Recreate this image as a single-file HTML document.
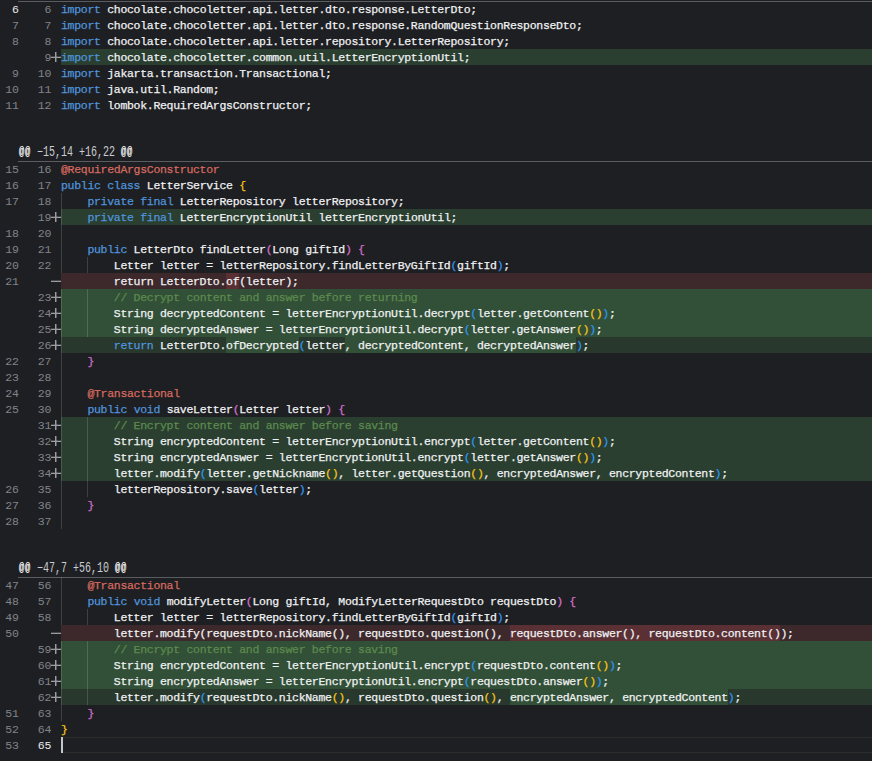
<!DOCTYPE html>
<html><head><meta charset="utf-8"><title>diff</title><style>
html,body{margin:0;padding:0;background:#1e1f22;}
body{width:872px;height:761px;position:relative;overflow:hidden;font-family:"Liberation Mono",monospace;font-size:11.5px;letter-spacing:-0.3px;color:#f0f1f3;}
.row{position:absolute;left:0;width:872px;height:16px;line-height:16px;white-space:pre;}
.row span.l,.row span.r{position:absolute;top:0.5px;height:16px;text-align:right;color:#80848a;}
.row span.l{left:0;width:18.5px;}
.row span.r{left:20px;width:31px;}
.row span.act{color:#e8eaed;}
.code{position:absolute;left:61px;top:0.5px;height:16px;-webkit-text-stroke:0.25px;}
.bgk{position:absolute;left:61px;top:0;width:811px;height:16px;}
.add .bgk{background:#2a3f30;}
.addhi .bgk{background:#325037;}
.addmod .bgk{background:#28382c;}
.del .bgk{background:#3d292b;}
.hl{position:absolute;top:0;height:16px;}
.addmod .hl{background:#325037;}
.del .hl{background:#5a3035;}
.k{color:#4f94dc;} .a{color:#d66a60;} .c{color:#5c8a4e;}
.b1{color:#f5c518;} .b2{color:#d56fd0;} .b3{color:#2d97f0;}
.pl{position:absolute;left:51px;top:3px;width:10px;height:10px;}
.pl:before{content:"";position:absolute;left:0;top:5px;width:10px;height:1px;background:#9a9da3;box-shadow:0 -1px 0 rgba(160,163,168,0.3);}
.pl:after{content:"";position:absolute;left:4px;top:0;width:1px;height:10px;background:#9a9da3;box-shadow:1px 0 0 rgba(160,163,168,0.45);}
.mi{position:absolute;left:51px;top:8px;width:10px;height:1px;background:#9a9da3;box-shadow:0 -1px 0 rgba(160,163,168,0.3);}
.sep{position:absolute;left:18px;width:854px;height:1px;background:#5b5c5f;}
.g{position:absolute;width:1px;background:rgba(255,255,255,0.15);}
.hh{position:absolute;left:19px;height:14px;line-height:14px;font-size:14px;color:#c9ccd1;transform-origin:0 0;transform:scaleX(0.7143);white-space:pre;letter-spacing:0;}
.at{font-size:12px;letter-spacing:1.2px;position:relative;top:-1.5px;color:#fff;-webkit-text-stroke:0.2px;}
.curline{position:absolute;left:61px;width:811px;height:16px;top:737px;border-top:1px solid #2d2e2c;border-bottom:1px solid #2d2e2c;box-sizing:border-box;}
.caret{position:absolute;left:61px;top:737px;width:2px;height:16px;background:#c4c6ca;}
</style></head><body>
<div class="row" style="top:1px"><span class="l act">6</span><span class="r">6</span><span class="code"><span class="k">import</span> chocolate.chocoletter.api.letter.dto.response.LetterDto;</span></div>
<div class="row" style="top:17px"><span class="l">7</span><span class="r">7</span><span class="code"><span class="k">import</span> chocolate.chocoletter.api.letter.dto.response.RandomQuestionResponseDto;</span></div>
<div class="row" style="top:33px"><span class="l">8</span><span class="r">8</span><span class="code"><span class="k">import</span> chocolate.chocoletter.api.letter.repository.LetterRepository;</span></div>
<div class="row add" style="top:49px"><i class="bgk"></i><span class="l"></span><span class="r">9</span><i class="pl"></i><span class="code"><span class="k">import</span> chocolate.chocoletter.common.util.LetterEncryptionUtil;</span></div>
<div class="row" style="top:65px"><span class="l">9</span><span class="r">10</span><span class="code"><span class="k">import</span> jakarta.transaction.Transactional;</span></div>
<div class="row" style="top:81px"><span class="l">10</span><span class="r">11</span><span class="code"><span class="k">import</span> java.util.Random;</span></div>
<div class="row" style="top:97px"><span class="l">11</span><span class="r">12</span><span class="code"><span class="k">import</span> lombok.RequiredArgsConstructor;</span></div>
<div class="sep" style="top:1px"></div>
<div class="hh" style="top:145px"><span class="at">@@</span> −15,14 +16,22 <span class="at">@@</span></div>
<div class="row" style="top:161px"><span class="l">15</span><span class="r">16</span><span class="code"><span class="a">@RequiredArgsConstructor</span></span></div>
<div class="row" style="top:177px"><span class="l">16</span><span class="r">17</span><span class="code"><span class="k">public</span> <span class="k">class</span> LetterService <span class="b1">{</span></span></div>
<div class="row" style="top:193px"><span class="l">17</span><span class="r">18</span><span class="code">    <span class="k">private</span> <span class="k">final</span> LetterRepository letterRepository;</span></div>
<div class="row add" style="top:209px"><i class="bgk"></i><span class="l"></span><span class="r">19</span><i class="pl"></i><span class="code">    <span class="k">private</span> <span class="k">final</span> LetterEncryptionUtil letterEncryptionUtil;</span></div>
<div class="row" style="top:225px"><span class="l">18</span><span class="r">20</span><span class="code"></span></div>
<div class="row" style="top:241px"><span class="l">19</span><span class="r">21</span><span class="code">    <span class="k">public</span> LetterDto findLetter<span class="b2">(</span>Long giftId<span class="b2">)</span> <span class="b2">{</span></span></div>
<div class="row" style="top:257px"><span class="l">20</span><span class="r">22</span><span class="code">        Letter letter = letterRepository.findLetterByGiftId<span class="b3">(</span>giftId<span class="b3">)</span>;</span></div>
<div class="row del" style="top:273px"><i class="bgk"></i><i class="hl" style="left:226.00px;width:13.20px"></i><span class="l">21</span><span class="r"></span><i class="mi"></i><span class="code">        return LetterDto.of(letter);</span></div>
<div class="row addhi" style="top:289px"><i class="bgk"></i><span class="l"></span><span class="r">23</span><i class="pl"></i><span class="code">        <span class="c">// Decrypt content and answer before returning</span></span></div>
<div class="row addhi" style="top:305px"><i class="bgk"></i><span class="l"></span><span class="r">24</span><i class="pl"></i><span class="code">        String decryptedContent = letterEncryptionUtil.decrypt<span class="b3">(</span>letter.getContent<span class="b1">(</span><span class="b1">)</span><span class="b3">)</span>;</span></div>
<div class="row addhi" style="top:321px"><i class="bgk"></i><span class="l"></span><span class="r">25</span><i class="pl"></i><span class="code">        String decryptedAnswer = letterEncryptionUtil.decrypt<span class="b3">(</span>letter.getAnswer<span class="b1">(</span><span class="b1">)</span><span class="b3">)</span>;</span></div>
<div class="row addmod" style="top:337px"><i class="bgk"></i><i class="hl" style="left:226.00px;width:72.60px"></i><i class="hl" style="left:344.80px;width:231.00px"></i><span class="l"></span><span class="r">26</span><i class="pl"></i><span class="code">        <span class="k">return</span> LetterDto.ofDecrypted<span class="b3">(</span>letter, decryptedContent, decryptedAnswer<span class="b3">)</span>;</span></div>
<div class="row" style="top:353px"><span class="l">22</span><span class="r">27</span><span class="code">    <span class="b2">}</span></span></div>
<div class="row" style="top:369px"><span class="l">23</span><span class="r">28</span><span class="code"></span></div>
<div class="row" style="top:385px"><span class="l">24</span><span class="r">29</span><span class="code">    <span class="a">@Transactional</span></span></div>
<div class="row" style="top:401px"><span class="l">25</span><span class="r">30</span><span class="code">    <span class="k">public</span> <span class="k">void</span> saveLetter<span class="b2">(</span>Letter letter<span class="b2">)</span> <span class="b2">{</span></span></div>
<div class="row add" style="top:417px"><i class="bgk"></i><span class="l"></span><span class="r">31</span><i class="pl"></i><span class="code">        <span class="c">// Encrypt content and answer before saving</span></span></div>
<div class="row add" style="top:433px"><i class="bgk"></i><span class="l"></span><span class="r">32</span><i class="pl"></i><span class="code">        String encryptedContent = letterEncryptionUtil.encrypt<span class="b3">(</span>letter.getContent<span class="b1">(</span><span class="b1">)</span><span class="b3">)</span>;</span></div>
<div class="row add" style="top:449px"><i class="bgk"></i><span class="l"></span><span class="r">33</span><i class="pl"></i><span class="code">        String encryptedAnswer = letterEncryptionUtil.encrypt<span class="b3">(</span>letter.getAnswer<span class="b1">(</span><span class="b1">)</span><span class="b3">)</span>;</span></div>
<div class="row add" style="top:465px"><i class="bgk"></i><span class="l"></span><span class="r">34</span><i class="pl"></i><span class="code">        letter.modify<span class="b3">(</span>letter.getNickname<span class="b1">(</span><span class="b1">)</span>, letter.getQuestion<span class="b1">(</span><span class="b1">)</span>, encryptedAnswer, encryptedContent<span class="b3">)</span>;</span></div>
<div class="row" style="top:481px"><span class="l">26</span><span class="r">35</span><span class="code">        letterRepository.save<span class="b3">(</span>letter<span class="b3">)</span>;</span></div>
<div class="row" style="top:497px"><span class="l">27</span><span class="r">36</span><span class="code">    <span class="b2">}</span></span></div>
<div class="row" style="top:513px"><span class="l">28</span><span class="r">37</span><span class="code"></span></div>
<div class="sep" style="top:161px"></div>
<div class="hh" style="top:561px"><span class="at">@@</span> −47,7 +56,10 <span class="at">@@</span></div>
<div class="curline"></div>
<div class="row" style="top:577px"><span class="l">47</span><span class="r">56</span><span class="code">    <span class="a">@Transactional</span></span></div>
<div class="row" style="top:593px"><span class="l">48</span><span class="r">57</span><span class="code">    <span class="k">public</span> <span class="k">void</span> modifyLetter<span class="b2">(</span>Long giftId, ModifyLetterRequestDto requestDto<span class="b2">)</span> <span class="b2">{</span></span></div>
<div class="row" style="top:609px"><span class="l">49</span><span class="r">58</span><span class="code">        Letter letter = letterRepository.findLetterByGiftId<span class="b3">(</span>giftId<span class="b3">)</span>;</span></div>
<div class="row del" style="top:625px"><i class="bgk"></i><i class="hl" style="left:509.80px;width:270.60px"></i><span class="l">50</span><span class="r"></span><i class="mi"></i><span class="code">        letter.modify(requestDto.nickName(), requestDto.question(), requestDto.answer(), requestDto.content());</span></div>
<div class="row addhi" style="top:641px"><i class="bgk"></i><span class="l"></span><span class="r">59</span><i class="pl"></i><span class="code">        <span class="c">// Encrypt content and answer before saving</span></span></div>
<div class="row addhi" style="top:657px"><i class="bgk"></i><span class="l"></span><span class="r">60</span><i class="pl"></i><span class="code">        String encryptedContent = letterEncryptionUtil.encrypt<span class="b3">(</span>requestDto.content<span class="b1">(</span><span class="b1">)</span><span class="b3">)</span>;</span></div>
<div class="row addhi" style="top:673px"><i class="bgk"></i><span class="l"></span><span class="r">61</span><i class="pl"></i><span class="code">        String encryptedAnswer = letterEncryptionUtil.encrypt<span class="b3">(</span>requestDto.answer<span class="b1">(</span><span class="b1">)</span><span class="b3">)</span>;</span></div>
<div class="row addmod" style="top:689px"><i class="bgk"></i><i class="hl" style="left:509.80px;width:217.80px"></i><span class="l"></span><span class="r">62</span><i class="pl"></i><span class="code">        letter.modify<span class="b3">(</span>requestDto.nickName<span class="b1">(</span><span class="b1">)</span>, requestDto.question<span class="b1">(</span><span class="b1">)</span>, encryptedAnswer, encryptedContent<span class="b3">)</span>;</span></div>
<div class="row" style="top:705px"><span class="l">51</span><span class="r">63</span><span class="code">    <span class="b2">}</span></span></div>
<div class="row" style="top:721px"><span class="l">52</span><span class="r">64</span><span class="code"><span class="b1">}</span></span></div>
<div class="row cur" style="top:737px"><i class="bgk"></i><span class="l">53</span><span class="r act">65</span><span class="code"></span></div>
<div class="sep" style="top:577px"></div>
<div class="caret"></div>
<div class="g" style="left:61px;top:193px;height:80px"></div>
<div class="g" style="left:61px;top:289px;height:240px"></div>
<div class="g" style="left:87px;top:257px;height:16px"></div>
<div class="g" style="left:87px;top:289px;height:48px"></div>
<div class="g" style="left:87px;top:417px;height:80px"></div>
<div class="g" style="left:61px;top:577px;height:48px"></div>
<div class="g" style="left:61px;top:641px;height:80px"></div>
<div class="g" style="left:87px;top:609px;height:16px"></div>
<div class="g" style="left:87px;top:641px;height:64px"></div>
</body></html>
